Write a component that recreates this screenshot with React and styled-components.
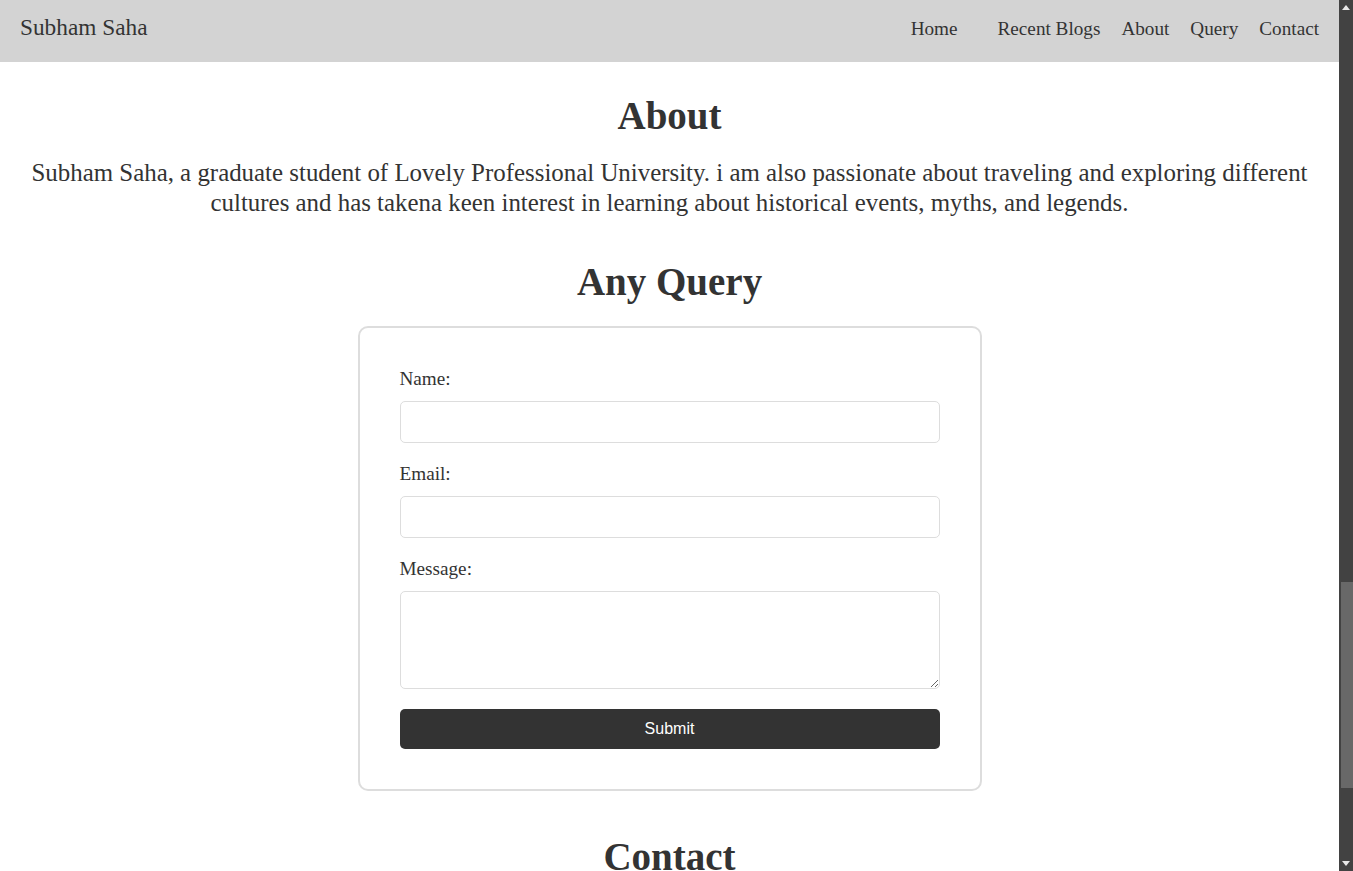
import React from "react";
import styled, { createGlobalStyle } from "styled-components";

const GlobalStyle = createGlobalStyle`
  html, body {
    height: 100%;
    overflow: hidden;
  }
  body {
    margin: 0;
    background: #ffffff;
    color: #333333;
    font-family: "Liberation Serif", "Times New Roman", serif;
  }
  #root { height: 100%; }
  * { box-sizing: border-box; }
`;

const Window = styled.div`
  display: flex;
  height: 100%;
`;

const Page = styled.div`
  flex: 1;
  min-width: 0;
  overflow: hidden;
`;

const ScrollTrack = styled.div`
  display: flex;
  flex-direction: column;
  width: 14px;
  height: 100%;
  background: #424242;
`;

const ScrollArrow = styled.div`
  display: flex;
  align-items: center;
  justify-content: center;
  height: 15px;
  flex: none;
`;

const ScrollSpace = styled.div`
  flex: ${(p) => (p.$fill ? 1 : "none")};
  height: ${(p) => (p.$fill ? "auto" : `${p.$size}px`)};
`;

const ScrollThumb = styled.div`
  flex: none;
  height: 206px;
  margin-left: 2px;
  background: #686868;
`;

const Header = styled.header`
  display: flex;
  align-items: baseline;
  justify-content: space-between;
  height: 62px;
  padding: 14px 20px 0 20px;
  background: #d3d3d3;
`;

const Logo = styled.div`
  font-size: 23.3px;
  color: #333333;
`;

const Nav = styled.nav`
  display: flex;
  align-items: baseline;
  gap: 21px;
`;

const NavLink = styled.a`
  font-size: 19.2px;
  color: #333333;
  text-decoration: none;
  margin-right: ${(p) => (p.$wide ? "19px" : "0")};
  cursor: pointer;
`;

const Main = styled.main`
  padding: 31px 20px 0;
`;

const Section = styled.section`
  margin-bottom: ${(p) => p.$gap || "41px"};
  min-height: ${(p) => p.$minHeight || "auto"};
  text-align: center;
`;

const Heading = styled.h2`
  margin: 0 0 20px;
  font-size: 39px;
  font-weight: bold;
  color: #333333;
`;

const Paragraph = styled.p`
  margin: 0;
  font-size: 24.9px;
  line-height: 30px;
  color: #333333;
`;

const Card = styled.form`
  width: 624px;
  margin: 22px auto 0;
  padding: 40px;
  border: 2px solid #dddddd;
  border-radius: 10px;
  text-align: left;
`;

const Label = styled.label`
  display: block;
  margin-bottom: 11px;
  font-size: 19.2px;
  color: #333333;
`;

const Input = styled.input`
  display: block;
  width: 100%;
  height: 42px;
  margin: 0 0 20px;
  padding: 10px;
  border: 1px solid #dddddd;
  border-radius: 5px;
  background: #ffffff;
  font-size: 16px;
  outline: none;
`;

const TextArea = styled.textarea`
  display: block;
  width: 100%;
  height: 98px;
  margin: 0 0 20px;
  padding: 10px;
  border: 1px solid #dddddd;
  border-radius: 5px;
  background: #ffffff;
  font-size: 16px;
  outline: none;
`;

const SubmitButton = styled.button`
  display: block;
  width: 100%;
  height: 40px;
  border: none;
  border-radius: 5px;
  background: #333333;
  color: #ffffff;
  font-family: "Liberation Sans", Arial, sans-serif;
  font-size: 16px;
  cursor: pointer;
`;

function Arrow({ up }) {
  return (
    <svg width="8" height="5" viewBox="0 0 8 5">
      <polygon
        points={up ? "0,5 8,5 4,0" : "0,0 8,0 4,5"}
        fill="#e8e8e8"
      />
    </svg>
  );
}

function Scrollbar() {
  return (
    <ScrollTrack>
      <ScrollArrow>
        <Arrow up />
      </ScrollArrow>
      <ScrollSpace $size={567} />
      <ScrollThumb />
      <ScrollSpace $fill />
      <ScrollArrow>
        <Arrow />
      </ScrollArrow>
    </ScrollTrack>
  );
}

export default function App() {
  return (
    <>
      <GlobalStyle />
      <Window>
        <Page>
          <Header>
            <Logo>Subham Saha</Logo>
            <Nav>
              <NavLink $wide>Home</NavLink>
              <NavLink>Recent Blogs</NavLink>
              <NavLink>About</NavLink>
              <NavLink>Query</NavLink>
              <NavLink>Contact</NavLink>
            </Nav>
          </Header>
          <Main>
            <Section>
              <Heading>About</Heading>
              <Paragraph>
                Subham Saha, a graduate student of Lovely Professional University. i am also
                passionate about traveling and exploring different cultures and has takena keen
                interest in learning about historical events, myths, and legends.
              </Paragraph>
            </Section>
            <Section $gap="43px">
              <Heading>Any Query</Heading>
              <Card onSubmit={(e) => e.preventDefault()}>
                <Label htmlFor="name">Name:</Label>
                <Input id="name" type="text" />
                <Label htmlFor="email">Email:</Label>
                <Input id="email" type="email" />
                <Label htmlFor="message">Message:</Label>
                <TextArea id="message" />
                <SubmitButton type="submit">Submit</SubmitButton>
              </Card>
            </Section>
            <Section $minHeight="300px">
              <Heading>Contact</Heading>
            </Section>
          </Main>
        </Page>
        <Scrollbar />
      </Window>
    </>
  );
}
